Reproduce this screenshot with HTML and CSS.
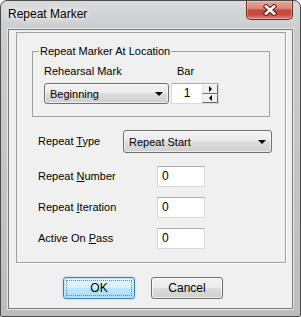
FILE: index.html
```html
<!DOCTYPE html>
<html lang="en">
  <head>
    <meta charset="UTF-8" />
    <title>Repeat Marker</title>
    <link rel="stylesheet" href="styles.css">
  </head>

  <body>
    <div class="window">
      <div class="titlebar">
        <span class="title">Repeat Marker</span>
        <div class="close">
          <svg width="16" height="12" viewBox="0 0 16 12">
            <path d="M4 2.5 L12 9.5 M12 2.5 L4 9.5" stroke="#5a2018" stroke-width="4.6" stroke-linecap="square" fill="none" />
            <path d="M4 2.5 L12 9.5 M12 2.5 L4 9.5" stroke="#fff" stroke-width="2.6" stroke-linecap="square" fill="none" />
          </svg>
        </div>
      </div>
      <div class="client">
        <div class="panel">
          <fieldset class="group">
            <legend>Repeat Marker At Location</legend>
            <div class="loc-grid">
              <span class="cap">Rehearsal Mark</span>
              <span class="cap bar-cap">Bar</span>
              <div class="combo">
                <span>Beginning</span>
                <i class="arrow"></i>
              </div>
              <div class="spin">
                <span class="spin-val">1</span>
                <div class="spin-btns">
                  <span class="spin-btn"><i class="tri-r"></i></span>
                  <span class="spin-btn"><i class="tri-l"></i></span>
                </div>
              </div>
            </div>
          </fieldset>

          <div class="row type-row">
            <span class="label">Repeat <u>T</u>ype</span>
            <div class="combo wide">
              <span>Repeat Start</span>
              <i class="arrow"></i>
            </div>
          </div>

          <div class="row num-row">
            <span class="label">Repeat <u>N</u>umber</span>
            <div class="textbox">0</div>
          </div>
          <div class="row num-row">
            <span class="label">Repeat <u>I</u>teration</span>
            <div class="textbox">0</div>
          </div>
          <div class="row num-row">
            <span class="label">Active On <u>P</u>ass</span>
            <div class="textbox">0</div>
          </div>
        </div>

        <div class="buttons">
          <div class="btn default"><span class="focus">OK</span></div>
          <div class="btn">Cancel</div>
        </div>
      </div>
    </div>
  </body>
</html>
```

FILE: styles.css
```css
* {
  margin: 0;
  padding: 0;
  box-sizing: border-box;
}

body {
  background: #fff;
  font-family: "Liberation Sans", Arial, sans-serif;
  font-size: 11px;
  color: #000;
}

.window {
  width: 301px;
  height: 317px;
  display: flex;
  flex-direction: column;
  padding: 0 7px 7px 7px;
  border: 1px solid #4b4b4b;
  border-radius: 7px 7px 2px 2px;
  background: linear-gradient(to bottom, #d9dadc, #cbccce 30px, #c2c3c5 200px, #bdbdbd);
}

.titlebar {
  height: 28px;
  display: flex;
  align-items: flex-start;
}

.title {
  font-size: 12px;
  line-height: 15px;
  padding-top: 6px;
  color: #000;
  text-shadow: 0 0 6px #fff, 0 0 10px #fff;
}

.close {
  margin-left: auto;
  width: 47px;
  height: 19px;
  display: flex;
  align-items: center;
  justify-content: center;
  border: 1px solid #6b2a22;
  border-top: none;
  border-radius: 0 0 5px 5px;
  background: linear-gradient(to bottom, #e6a597 0%, #d98a7b 40%, #c4473a 52%, #c64c3e 75%, #dc8676 100%);
  box-shadow: inset 0 0 0 1px rgba(255, 255, 255, 0.3);
}

.client {
  flex: 1;
  border: 1px solid #7d7d7d;
  background: #f0f0f0;
  padding: 2px 6px 0 7px;
  box-shadow: 0 0 0 1px #e6e6e6;
}

.panel {
  height: 231px;
  border: 1px solid #a0a0a0;
  box-shadow: 1px 1px 0 #fff;
  padding-left: 15px;
}

.group {
  width: 238px;
  margin-top: 12px;
  border: 1px solid #a0a0a0;
  padding: 7px 0 12px 11px;
}

.group legend {
  margin-left: -5px;
  padding: 0 1px;
  line-height: 13px;
}

.loc-grid {
  display: grid;
  grid-template-columns: 125px 48px;
  column-gap: 2px;
  row-gap: 5px;
}

.cap {
  line-height: 13px;
}

.bar-cap {
  padding-left: 6px;
}

.combo {
  height: 21px;
  display: flex;
  align-items: center;
  justify-content: space-between;
  padding: 0 5px;
  border: 1px solid #707070;
  border-radius: 3px;
  background: linear-gradient(to bottom, #f2f2f2 0%, #ebebeb 50%, #dddddd 50%, #cfcfcf 100%);
  box-shadow: inset 0 0 0 1px rgba(255, 255, 255, 0.6);
}

.combo.wide {
  width: 149px;
  height: 23px;
}

.arrow {
  width: 0;
  height: 0;
  border-left: 4px solid transparent;
  border-right: 4px solid transparent;
  border-top: 4px solid #000;
}

.spin {
  height: 21px;
  display: flex;
  background: #fff;
  border: 1px solid #d5d8dc;
  border-top-color: #abadb3;
}

.spin-val {
  flex: 1;
  text-align: center;
  line-height: 19px;
  font-size: 12px;
}

.spin-btns {
  width: 16px;
  display: flex;
  flex-direction: column;
}

.spin-btn {
  flex: 1;
  display: flex;
  align-items: center;
  justify-content: center;
  background: #f0f0f0;
  border: 1px solid;
  border-color: #fff #696969 #696969 #e3e3e3;
}

.tri-r {
  width: 0;
  height: 0;
  border-top: 3px solid transparent;
  border-bottom: 3px solid transparent;
  border-left: 3px solid #000;
}

.tri-l {
  width: 0;
  height: 0;
  border-top: 3px solid transparent;
  border-bottom: 3px solid transparent;
  border-right: 3px solid #000;
}

.row {
  display: flex;
  align-items: center;
  margin-left: -15px;
  padding-left: 21px;
}

.row .label {
  line-height: 13px;
}

.type-row {
  margin-top: 13px;
}

.type-row .label {
  width: 85px;
}

.num-row {
  margin-top: 13px;
}

.num-row + .num-row {
  margin-top: 10px;
}

.num-row .label {
  width: 119px;
}

.textbox {
  width: 48px;
  height: 21px;
  line-height: 19px;
  padding-left: 4px;
  font-size: 12px;
  background: #fff;
  border: 1px solid #d5d8dc;
  border-top-color: #abadb3;
}

.buttons {
  display: flex;
  gap: 16px;
  margin-top: 14px;
  padding-left: 47px;
}

.btn {
  width: 72px;
  height: 22px;
  display: flex;
  align-items: center;
  justify-content: center;
  border: 1px solid #707070;
  border-radius: 3px;
  background: linear-gradient(to bottom, #f2f2f2 0%, #ebebeb 50%, #dddddd 50%, #cfcfcf 100%);
  box-shadow: inset 0 0 0 1px rgba(255, 255, 255, 0.7);
  font-size: 12px;
}

.btn.default {
  border-color: #3c7fb1;
  background: linear-gradient(to bottom, #e8f5fc 0%, #d9f0fc 50%, #bee6fd 50%, #a9daf5 100%);
  box-shadow: inset 0 0 0 1px #c1e5f8, 0 0 2px #8ccbf0;
  padding: 2px;
}

.focus {
  width: 100%;
  height: 100%;
  display: flex;
  align-items: center;
  justify-content: center;
  border: 1px dotted #5a8bb0;
}
```
